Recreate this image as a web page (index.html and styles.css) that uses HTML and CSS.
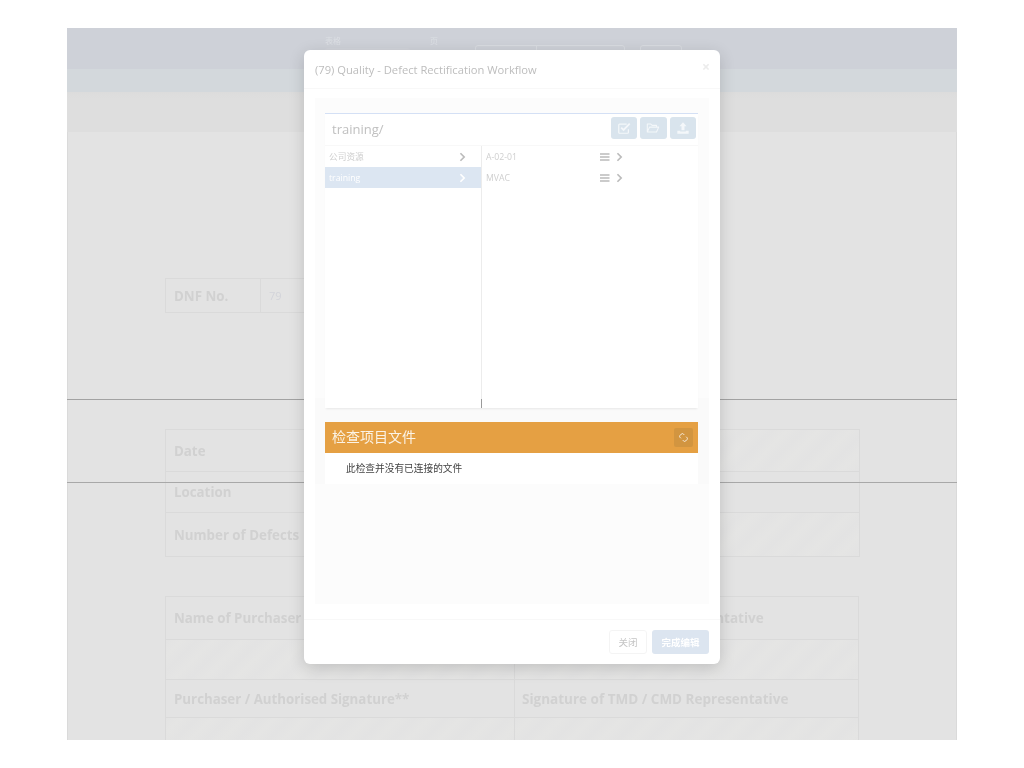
FILE: index.html
```html
<!DOCTYPE html>
<html lang="zh">
<head>
<meta charset="utf-8">
<title>Defect Rectification Workflow</title>
<link rel="stylesheet" href="styles.css">
</head>
<body>
<div class="screen">
  <div class="topbar">
    <div class="top-group g1"><span class="top-label">表格</span><span class="top-field"></span></div>
    <div class="top-group g2"><span class="top-label">页</span></div>
    <div class="top-btn b1"><span class="seg"></span></div>
    <div class="top-btn b2"></div>
  </div>
  <div class="subbar"></div>
  <div class="toolbar"></div>
  <div class="paper">
    <div class="form-table dnf">
      <div class="cell label c-dnf">DNF No.</div>
      <div class="cell value">79</div>
    </div>
    <div class="form-table info">
      <div class="row r42"><div class="cell label c-left">Date</div><div class="cell striped grow"></div></div>
      <div class="row r41"><div class="cell label c-left">Location</div><div class="cell grow"></div></div>
      <div class="row r43"><div class="cell label c-left">Number of Defects</div><div class="cell striped grow"></div></div>
    </div>
    <div class="form-table sign">
      <div class="row r43"><div class="cell label half">Name of Purchaser</div><div class="cell label half right">Name of TMD / CMD Representative</div></div>
      <div class="row r40"><div class="cell striped half"></div><div class="cell striped half right"></div></div>
      <div class="row r38"><div class="cell label half">Purchaser / Authorised Signature**</div><div class="cell label half right">Signature of TMD / CMD Representative</div></div>
      <div class="row r40"><div class="cell striped half"></div><div class="cell striped half right"></div></div>
    </div>
    <div class="rule rule-a"></div>
    <div class="rule rule-b"></div>
  </div>
</div>

<div class="modal">
  <div class="modal-head">
    <span class="modal-title">(79) Quality - Defect Rectification Workflow</span>
    <span class="close">×</span>
  </div>
  <div class="modal-body">
    <div class="panel">
      <div class="browser">
        <div class="path-row">
          <span class="path">training/</span>
          <div class="tools">
            <button class="tool"><svg viewBox="0 0 16 16" class="ico"><path d="M13 9.500V13a1 1 0 0 1-1 1H3a1 1 0 0 1-1-1V4.500a1 1 0 0 1 1-1h8" fill="none" stroke="currentColor" stroke-width="1.400"/><path d="M4.800 7.500l2.700 2.700L14.500 3" fill="none" stroke="currentColor" stroke-width="2"/></svg></button>
            <button class="tool"><svg viewBox="0 0 16 16" class="ico"><path d="M1.500 12.500V3.500h4l1.500 1.500h5v2M1.500 12.500l2.500-5.500h10.500l-2.500 5.500z" fill="none" stroke="currentColor" stroke-width="1.200" stroke-linejoin="round"/></svg></button>
            <button class="tool"><svg viewBox="0 0 16 16" class="ico"><path d="M8 1.500l4 4.500H9.700v4.500H6.300V6H4zM1.500 11h3.300v1h6.400v-1h3.300v3.500h-13z" fill="currentColor"/></svg></button>
          </div>
        </div>
        <div class="columns">
          <div class="col col-left">
            <div class="item"><span class="item-name">公司资源</span><svg viewBox="0 0 8 12" class="chev"><path d="M1.500 1.500L6 6l-4.500 4.500" fill="none" stroke="currentColor" stroke-width="2"/></svg></div>
            <div class="item active"><span class="item-name">training</span><svg viewBox="0 0 8 12" class="chev"><path d="M1.500 1.500L6 6l-4.500 4.500" fill="none" stroke="currentColor" stroke-width="2"/></svg></div>
          </div>
          <div class="col col-right">
            <div class="item sub"><span class="item-name">A-02-01</span><svg viewBox="0 0 10 8" class="menu"><path d="M0 1h9.500M0 4h9.500M0 7h9.500" stroke="currentColor" stroke-width="1.300"/></svg><svg viewBox="0 0 8 12" class="chev"><path d="M1.500 1.500L6 6l-4.500 4.500" fill="none" stroke="currentColor" stroke-width="2"/></svg></div>
            <div class="item sub"><span class="item-name">MVAC</span><svg viewBox="0 0 10 8" class="menu"><path d="M0 1h9.500M0 4h9.500M0 7h9.500" stroke="currentColor" stroke-width="1.300"/></svg><svg viewBox="0 0 8 12" class="chev"><path d="M1.500 1.500L6 6l-4.500 4.500" fill="none" stroke="currentColor" stroke-width="2"/></svg></div>
          </div>
        </div>
      </div>
      <div class="linked">
        <div class="linked-head">
          <span class="linked-title">检查项目文件</span>
          <button class="unlink"><svg viewBox="0 0 12 12" class="unlink-ico"><path d="M7 2.500l-1-1a2.100 2.100 0 0 0-3 0L1.500 3a2.100 2.100 0 0 0 0 3l1 1M5 9.500l1 1a2.100 2.100 0 0 0 3 0l1.500-1.500a2.100 2.100 0 0 0 0-3l-1-1" fill="none" stroke="currentColor" stroke-width="1.300"/></svg></button>
        </div>
        <div class="linked-body">此检查并没有已连接的文件</div>
      </div>
    </div>
  </div>
  <div class="modal-foot">
    <button class="btn btn-plain">关闭</button>
    <button class="btn btn-primary">完成编辑</button>
  </div>
</div>
</body>
</html>
```

FILE: styles.css
```css
* { box-sizing: border-box; }
html, body { margin: 0; padding: 0; background: #fff; }
body {
  width: 1024px;
  height: 768px;
  overflow: hidden;
  padding: 28px 67px 0;
  font-family: "Open Sans", "Noto Sans CJK SC", sans-serif;
}
.screen {
  width: 890px;
  height: 712px;
  overflow: hidden;
  display: flex;
  flex-direction: column;
  background: #e2e2e2;
  filter: blur(.4px);
}
.topbar {
  height: 41px;
  flex: none;
  background: #ced1d8;
  display: flex;
  align-items: flex-start;
  padding: 8px 0 0 258px;
  color: #dcdfe4;
}
.top-group { display: flex; flex-direction: column; font-size: 8px; line-height: 9px; }
.g1 { width: 105px; }
.g2 { width: 45px; }
.top-field { display: block; height: 8px; margin-top: 3px; width: 85px; background: #d1d4da; border-radius: 3px; }
.top-btn { height: 13px; margin-top: 9px; border: 1px solid #d9dce1; border-radius: 3px; }
.b1 { width: 150px; margin-right: 15px; }
.seg { display: block; width: 61px; height: 100%; border-right: 1px solid #d9dce1; }
.b2 { width: 42px; }
.subbar { height: 23px; flex: none; background: #d3d8dc; }
.toolbar { height: 40px; flex: none; background: linear-gradient(#dcdcdc, #dedede 15%); }
.paper {
  flex: 1;
  position: relative;
  background: #e3e3e3;
  border-left: 1px solid #dadada;
  border-right: 1px solid #dadada;
  padding: 146px 96px 0 97px;
  color: #d1d1d1;
}
.form-table { border: 1px solid #dadada; width: 695px; }
.dnf { display: flex; height: 35px; width: 400px; }
.c-dnf { width: 94px; flex: none; }
.value { flex: 1; display: flex; align-items: center; font-size: 11px; color: #d3d4da; border-left: 1px solid #dadada; padding-left: 6px; }
.info { margin-top: 116px; }
.sign { margin-top: 39px; width: 694px; }
.row { display: flex; border-bottom: 1px solid #dadada; }
.row:last-child { border-bottom: 0; }
.r38 { height: 38px; }
.r40 { height: 40px; }
.r41 { height: 41px; }
.r42 { height: 42px; }
.r43 { height: 43px; }
.cell { padding: 0 8px; white-space: nowrap; }
.label { font-size: 13.300px; font-weight: 700; display: flex; align-items: center; color: #d1d1d1; }
.label.right { font-size: 13.500px; }
.c-left { width: 140px; flex: none; }
.grow { flex: 1; }
.half { width: 348px; flex: none; }
.right { flex: 1; border-left: 1px solid #dadada; padding-left: 7px; }
.striped {
  background: repeating-linear-gradient(135deg, #e3e3e3 0, #e5e5e4 11px, #e3e3e3 22px);
}
.rule { position: absolute; left: -1px; right: -1px; height: 1px; }
.rule-a { top: 267px; background: #a2a2a2; }
.rule-b { top: 350px; background: #a8a8a8; }

.modal {
  position: absolute;
  left: 304px;
  top: 50px;
  width: 416px;
  height: 614px;
  background: #fff;
  border-radius: 6px;
  box-shadow: 0 4px 16px rgba(0, 0, 0, .16);
  display: flex;
  flex-direction: column;
}
.modal-head {
  height: 39px;
  flex: none;
  display: flex;
  align-items: center;
  justify-content: space-between;
  padding: 0 11px;
  border-bottom: 1px solid #f8f8f8;
  color: #bdbdbd;
  font-size: 11.200px;
  filter: blur(.4px);
}
.close { color: #ececec; font-size: 14px; font-weight: 700; margin-top: -5px; margin-right: -1px; }
.modal-body { flex: 1; padding: 9px 11px 15px; filter: blur(.4px); }
.panel { height: 506px; background: #fcfcfc; padding: 15px 11px 0 10px; }
.browser {
  position: relative;
  z-index: 1;
  height: 295px;
  background: #fff;
  border-top: 1px solid #d4e0f5;
  box-shadow: 0 2px 2px -1px rgba(0, 0, 0, .08);
  display: flex;
  flex-direction: column;
}
.path-row {
  height: 32px;
  flex: none;
  display: flex;
  align-items: center;
  justify-content: space-between;
  padding: 0 2px 4px 7px;
  border-bottom: 1px solid #f8f8f8;
}
.path { font-size: 13px; color: #c0c0c0; padding-top: 2px; }
.tools { display: flex; gap: 3px; }
.tool {
  width: 26.500px;
  height: 22px;
  padding: 0;
  border: 0;
  border-radius: 3px;
  background: #d9e4ed;
  color: #f4f7fa;
  display: flex;
  align-items: center;
  justify-content: center;
}
.ico { width: 14px; height: 14px; }
.columns { flex: 1; display: flex; }
.col-left { width: 157px; flex: none; border-right: 1px solid #ececec; position: relative; }
.col-left::after { content: ""; position: absolute; right: -1px; bottom: 0; width: 1px; height: 9px; background: #9a9a9a; }
.col-right { flex: 1; }
.item {
  height: 21px;
  display: flex;
  align-items: center;
  padding: 0 15px 0 4px;
  font-size: 8.700px;
  color: #cfcfcf;
}
.item-name { flex: 1; }
.active { background: #dce6f2; color: #fff; }
.chev { width: 7px; height: 10px; color: #bbb; }
.active .chev { color: #fff; }
.sub { padding: 0 75px 0 4px; }
.menu { width: 10px; height: 8px; color: #bbb; margin-right: 6px; }
.linked {
  margin: -10px -11px 0 -10px;
  padding: 24px 11px 0 10px;
  background: #fafafa;
}
.linked-head {
  height: 31px;
  background: #e5a043;
  display: flex;
  align-items: center;
  justify-content: space-between;
  padding: 0 5px 0 7px;
}
.linked-title { font-size: 14px; color: #fbf3e6; margin-top: -3px; font-family: "Noto Sans CJK SC", sans-serif; }
.unlink {
  width: 19px;
  height: 19px;
  padding: 0;
  border: 0;
  border-radius: 2px;
  background: #d29540;
  color: #f8efe2;
  display: flex;
  align-items: center;
  justify-content: center;
}
.unlink-ico { width: 9px; height: 9px; }
.linked-body {
  height: 31px;
  background: #fff;
  padding: 0 0 1px 21px;
  display: flex;
  align-items: center;
  font-size: 9.700px;
  color: #444;
}
.modal-foot {
  height: 45px;
  flex: none;
  border-top: 1px solid #f8f8f8;
  display: flex;
  justify-content: flex-end;
  gap: 5px;
  padding: 10px 11px 0 0;
  filter: blur(.3px);
}
.btn {
  height: 24px;
  padding: 0;
  border-radius: 3px;
  font: 9.500px "Noto Sans CJK SC", sans-serif;
}
.btn-plain { width: 38px; border: 1px solid #f4f4f4; background: #fff; color: #c4c4c4; }
.btn-primary { width: 57px; border: 0; background: #dce5f0; color: #fff; font-weight: 700; }
```
